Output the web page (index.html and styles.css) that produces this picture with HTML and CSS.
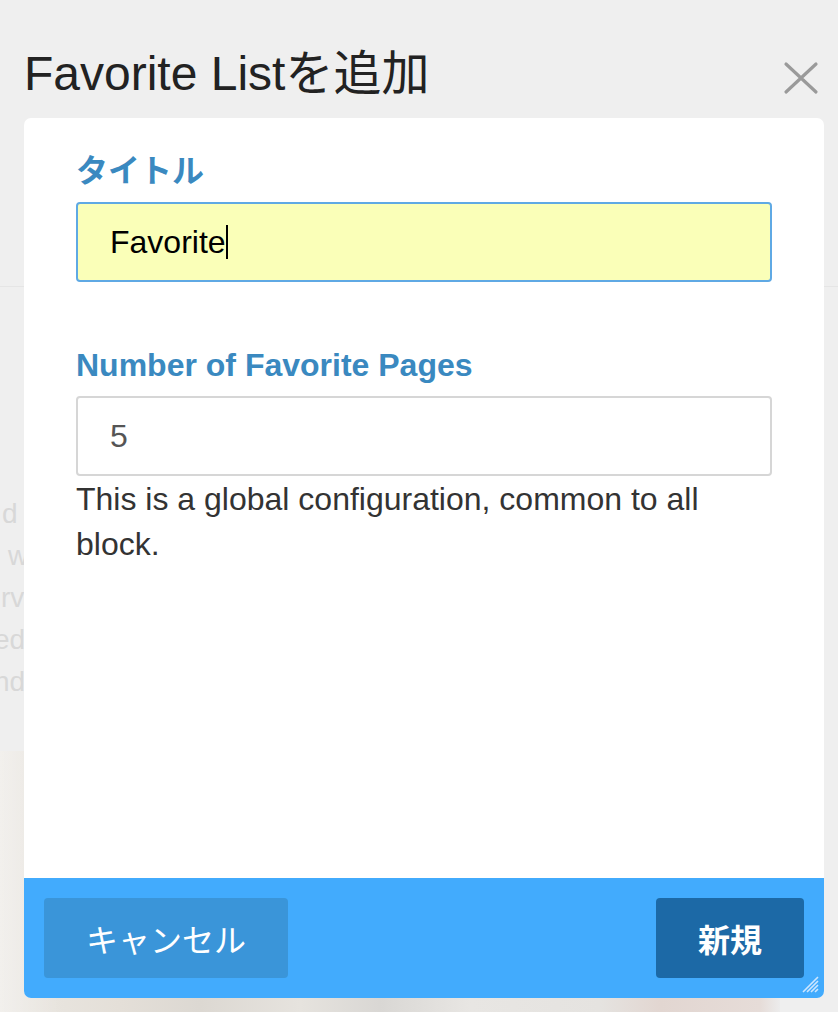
FILE: index.html
```html
<!DOCTYPE html>
<html lang="ja">
<head>
<meta charset="utf-8">
<title>Favorite Listを追加</title>
<link rel="stylesheet" href="styles.css">
</head>
<body>
<div class="page">
  <div class="page-rule"></div>
  <div class="page-text">
    <p class="ln ln-1">d</p>
    <p class="ln ln-2">w</p>
    <p class="ln ln-3">rv</p>
    <p class="ln ln-4">ed</p>
    <p class="ln ln-5">nd</p>
  </div>
  <div class="page-photo"></div>
</div>

<div class="modal">
  <div class="modal-head">
    <h1 class="modal-title">Favorite Listを追加</h1>
    <button class="close" type="button" aria-label="閉じる">
      <svg width="36" height="36" viewBox="0 0 36 36" aria-hidden="true">
        <path d="M3 4 L33 32 M33 4 L3 32" stroke="#9a9a9a" stroke-width="3.2" stroke-linecap="round" fill="none"/>
      </svg>
    </button>
  </div>

  <div class="dialog">
    <div class="dialog-body">
      <div class="group group-title">
        <label class="lbl">タイトル</label>
        <div class="field field-focus"><span class="val">Favorite</span><span class="caret"></span></div>
      </div>
      <div class="group">
        <label class="lbl">Number of Favorite Pages</label>
        <div class="field"><span class="val val-num">5</span></div>
        <p class="help">This is a global configuration, common to all block.</p>
      </div>
    </div>
    <div class="dialog-foot">
      <button class="btn btn-cancel" type="button">キャンセル</button>
      <button class="btn btn-new" type="button">新規</button>
    </div>
    <svg class="grip" width="18" height="18" viewBox="0 0 18 18" aria-hidden="true">
      <path d="M17 2 L2 17 M17 6 L6 17 M17 10 L10 17 M17 14 L14 17" stroke="#cde6ff" stroke-width="1.6" fill="none"/>
    </svg>
  </div>
</div>
</body>
</html>
```

FILE: styles.css
```css
* { box-sizing: border-box; }

html, body {
  margin: 0;
  padding: 0;
}

body {
  width: 838px;
  height: 1012px;
  overflow: hidden;
  background: #efefef;
  font-family: "Liberation Sans", "Noto Sans CJK JP", sans-serif;
  color: #333;
  position: relative;
}

/* background page behind the modal */
.page {
  height: 1012px;
  overflow: hidden;
}

.page-rule {
  margin-top: 286px;
  height: 1px;
  background: #e5e5e5;
}

.page-text {
  margin-top: 206px;
  width: 24px;
  overflow: hidden;
}

.ln {
  margin: 0;
  font-size: 28px;
  line-height: 42px;
  color: #d8d8d8;
  white-space: nowrap;
}

.ln-1 { padding-left: 2px; }
.ln-2 { padding-left: 8px; }
.ln-3 { padding-left: 1px; }
.ln-4 { margin-left: -6px; }
.ln-5 { margin-left: -6px; }

.page-photo {
  margin-top: 48px;
  width: 780px;
  height: 300px;
  background:
    linear-gradient(90deg, rgba(255,255,255,0.35) 0, rgba(255,255,255,0) 60px),
    linear-gradient(90deg, #ebe8e3 0, #e4dfd8 120px, #dcd8d2 200px, #e6e3de 300px, #d9d7d4 380px, #e8e6e3 470px, #e5e3e0 600px, #e2d6d1 660px, #e6dcd8 760px, #ececec 780px);
}

/* modal layer over the page */
.modal {
  position: absolute;
  left: 0;
  top: 0;
  width: 838px;
  height: 1012px;
  padding: 0 14px 0 24px;
  display: flex;
  flex-direction: column;
}

.modal-head {
  display: flex;
  align-items: flex-start;
  justify-content: space-between;
  height: 118px;
  padding-top: 48px;
}

.modal-title {
  margin: 0;
  font-size: 48px;
  line-height: 52px;
  font-weight: 400;
  color: #222;
}

.close {
  margin: 12px 5px 0 0;
  padding: 0;
  border: 0;
  background: none;
  width: 36px;
  height: 36px;
  filter: blur(0.5px);
}

.close svg { display: block; }

.dialog {
  width: 800px;
  height: 880px;
  background: #fff;
  border-radius: 7px;
  display: flex;
  flex-direction: column;
  overflow: hidden;
  position: relative;
}

.dialog-body {
  flex: 1;
  padding: 30px 52px 0;
}

.group-title {
  margin-bottom: 60px;
}

.lbl {
  display: block;
  font-size: 32px;
  line-height: 46px;
  font-weight: 700;
  color: #3a89c0;
  margin-bottom: 8px;
}

.field {
  height: 80px;
  border: 2px solid #d6d6d6;
  border-radius: 4px;
  padding: 0 32px;
  display: flex;
  align-items: center;
  font-size: 32px;
  color: #555;
  background: #fff;
}

.field-focus {
  border-color: #5fa9e4;
  background: #faffb8;
  color: #000;
}

.val { line-height: 40px; }

.caret {
  display: inline-block;
  width: 2px;
  height: 34px;
  background: #000;
  margin-left: 0;
}

.help {
  margin: 1px 0 0;
  font-size: 32px;
  line-height: 45px;
  color: #333;
}

.dialog-foot {
  height: 120px;
  background: #42abfd;
  padding: 20px;
  display: flex;
  justify-content: space-between;
  align-items: flex-start;
}

.btn {
  height: 80px;
  border: 0;
  border-radius: 4px;
  color: #fff;
  font-family: "Liberation Sans", "Noto Sans CJK JP", sans-serif;
  font-size: 32px;
  padding: 0;
}

.btn-cancel {
  width: 244px;
  background: #3a95d9;
  font-weight: 400;
}

.btn-new {
  width: 148px;
  background: #1c69a6;
  font-weight: 700;
}

.grip {
  position: absolute;
  right: 5px;
  bottom: 5px;
}
```
